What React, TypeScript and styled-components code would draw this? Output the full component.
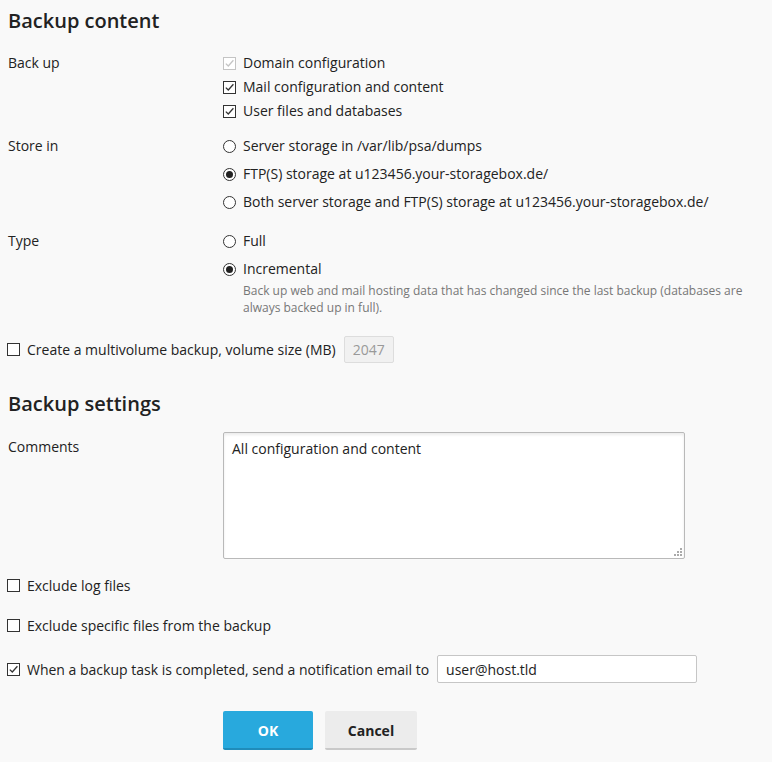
import React from "react";
import styled, { createGlobalStyle } from "styled-components";

const GlobalStyle = createGlobalStyle`
  html, body {
    margin: 0;
    padding: 0;
    background: #f9f9f9;
  }
  body {
    font-family: "Open Sans", "Liberation Sans", sans-serif;
    font-size: 14px;
    color: #222222;
  }
`;

const Page = styled.div`
  padding: 9px 8px 0 8px;
`;

const Heading = styled.h2<{ $top?: number }>`
  margin: ${(p) => p.$top ?? 0}px 0 0 0;
  font-size: 20px;
  line-height: 24px;
  font-weight: 600;
  color: #222222;
`;

const FieldRow = styled.div<{ $top: number }>`
  display: flex;
  margin-top: ${(p) => p.$top}px;
`;

const Label = styled.div<{ $line: number }>`
  width: 215px;
  flex-shrink: 0;
  line-height: ${(p) => p.$line}px;
`;

const Options = styled.div`
  display: flex;
  flex-direction: column;
  flex: 1;
`;

const Option = styled.label<{ $line: number }>`
  display: flex;
  align-items: center;
  height: ${(p) => p.$line}px;
  line-height: ${(p) => p.$line}px;
`;

const Box = styled.span<{ $disabled?: boolean }>`
  width: 13px;
  height: 13px;
  box-sizing: border-box;
  border: 1px solid ${(p) => (p.$disabled ? "#c4c4c4" : "#333333")};
  background: #ffffff;
  display: inline-flex;
  align-items: center;
  justify-content: center;
  margin-right: 7px;
  flex-shrink: 0;
`;

const Round = styled.span<{ $on?: boolean }>`
  width: 13px;
  height: 13px;
  box-sizing: border-box;
  border: 1px solid #333333;
  border-radius: 50%;
  background: #ffffff;
  display: inline-flex;
  align-items: center;
  justify-content: center;
  margin-right: 7px;
  flex-shrink: 0;

  &::after {
    content: "";
    display: ${(p) => (p.$on ? "block" : "none")};
    width: 7px;
    height: 7px;
    border-radius: 50%;
    background: #222222;
  }
`;

const Hint = styled.div`
  font-size: 12px;
  line-height: 17px;
  color: #777777;
  padding-left: 20px;
  margin-top: -1px;
  max-width: 510px;
`;

const InlineRow = styled.div<{ $top: number; $height: number }>`
  display: flex;
  align-items: center;
  height: ${(p) => p.$height}px;
  margin-top: ${(p) => p.$top}px;
  margin-left: -1px;
`;

const SmallInput = styled.input`
  width: 50px;
  height: 27px;
  box-sizing: border-box;
  margin-left: 8px;
  border: 1px solid #dddddd;
  border-radius: 2px;
  background: #f1f1f1;
  color: #999999;
  font-family: "Open Sans", "Liberation Sans", sans-serif;
  font-size: 14px;
  padding: 0 8px;
`;

const TextWrap = styled.div`
  position: relative;
  width: 462px;
  height: 127px;
`;

const Comments = styled.textarea`
  width: 100%;
  height: 100%;
  box-sizing: border-box;
  resize: none;
  border: 1px solid #b9b9b9;
  border-radius: 2px;
  background: #ffffff;
  box-shadow: inset 0 2px 3px rgba(0, 0, 0, 0.08);
  padding: 6px 8px;
  font-family: "Open Sans", "Liberation Sans", sans-serif;
  font-size: 14px;
  line-height: 19px;
  color: #222222;
  outline: none;
`;

const Grip = styled.svg`
  position: absolute;
  right: 3px;
  bottom: 3px;
`;

const EmailInput = styled.input`
  width: 260px;
  height: 28px;
  box-sizing: border-box;
  margin-left: 8px;
  border: 1px solid #c6c6c6;
  border-radius: 2px;
  background: #ffffff;
  font-family: "Open Sans", "Liberation Sans", sans-serif;
  font-size: 14px;
  color: #222222;
  padding: 0 8px;
  outline: none;
`;

const Buttons = styled.div`
  display: flex;
  gap: 12px;
  margin-top: 28px;
  padding-left: 215px;
`;

const Button = styled.button<{ $primary?: boolean }>`
  height: 39px;
  min-width: ${(p) => (p.$primary ? 90 : 92)}px;
  box-sizing: border-box;
  border: none;
  border-radius: 2px;
  border-bottom: 2px solid ${(p) => (p.$primary ? "#1f8cba" : "#c9c9c9")};
  background: ${(p) => (p.$primary ? "#28a9dd" : "#ececec")};
  color: ${(p) => (p.$primary ? "#ffffff" : "#222222")};
  font-family: "Open Sans", "Liberation Sans", sans-serif;
  font-size: 14px;
  font-weight: 700;
  padding: 2px 20px 0 20px;
`;

const Check = ({ disabled }: { disabled?: boolean }) => (
  <Box $disabled={disabled}>
    <svg width="11" height="11" viewBox="0 0 11 11">
      <path
        d="M1.8 5.6 L4.3 8 L9.4 2.3"
        fill="none"
        stroke={disabled ? "#c4c4c4" : "#333333"}
        strokeWidth="1.3"
      />
    </svg>
  </Box>
);

const Empty = () => <Box />;

const App: React.FC = () => {
  return (
    <>
      <GlobalStyle />
      <Page>
        <Heading>Backup content</Heading>

        <FieldRow $top={18}>
          <Label $line={24}>Back up</Label>
          <Options>
            <Option $line={24}>
              <Check disabled />
              Domain configuration
            </Option>
            <Option $line={24}>
              <Check />
              Mail configuration and content
            </Option>
            <Option $line={24}>
              <Check />
              User files and databases
            </Option>
          </Options>
        </FieldRow>

        <FieldRow $top={9}>
          <Label $line={28}>Store in</Label>
          <Options>
            <Option $line={28}>
              <Round />
              Server storage in /var/lib/psa/dumps
            </Option>
            <Option $line={28}>
              <Round $on />
              FTP(S) storage at u123456.your-storagebox.de/
            </Option>
            <Option $line={28}>
              <Round />
              Both server storage and FTP(S) storage at u123456.your-storagebox.de/
            </Option>
          </Options>
        </FieldRow>

        <FieldRow $top={11}>
          <Label $line={28}>Type</Label>
          <Options>
            <Option $line={28}>
              <Round />
              Full
            </Option>
            <Option $line={28}>
              <Round $on />
              Incremental
            </Option>
            <Hint>
              Back up web and mail hosting data that has changed since the last backup (databases are
              always backed up in full).
            </Hint>
          </Options>
        </FieldRow>

        <InlineRow $top={20} $height={27}>
          <Empty />
          Create a multivolume backup, volume size (MB)
          <SmallInput defaultValue="2047" disabled />
        </InlineRow>

        <Heading $top={29}>Backup settings</Heading>

        <FieldRow $top={16}>
          <Label $line={30}>Comments</Label>
          <TextWrap>
            <Comments defaultValue="All configuration and content" />
            <Grip width="8" height="8" viewBox="0 0 8 8">
              <rect x="6" y="0" width="2" height="2" fill="#aaaaaa" />
              <rect x="3" y="3" width="2" height="2" fill="#aaaaaa" />
              <rect x="6" y="3" width="2" height="2" fill="#aaaaaa" />
              <rect x="0" y="6" width="2" height="2" fill="#aaaaaa" />
              <rect x="3" y="6" width="2" height="2" fill="#aaaaaa" />
              <rect x="6" y="6" width="2" height="2" fill="#aaaaaa" />
            </Grip>
          </TextWrap>
        </FieldRow>

        <InlineRow $top={16} $height={20}>
          <Empty />
          Exclude log files
        </InlineRow>

        <InlineRow $top={20} $height={20}>
          <Empty />
          Exclude specific files from the backup
        </InlineRow>

        <InlineRow $top={20} $height={28}>
          <Check />
          When a backup task is completed, send a notification email to
          <EmailInput defaultValue="user@host.tld" />
        </InlineRow>

        <Buttons>
          <Button $primary>OK</Button>
          <Button>Cancel</Button>
        </Buttons>
      </Page>
    </>
  );
};

export default App;
